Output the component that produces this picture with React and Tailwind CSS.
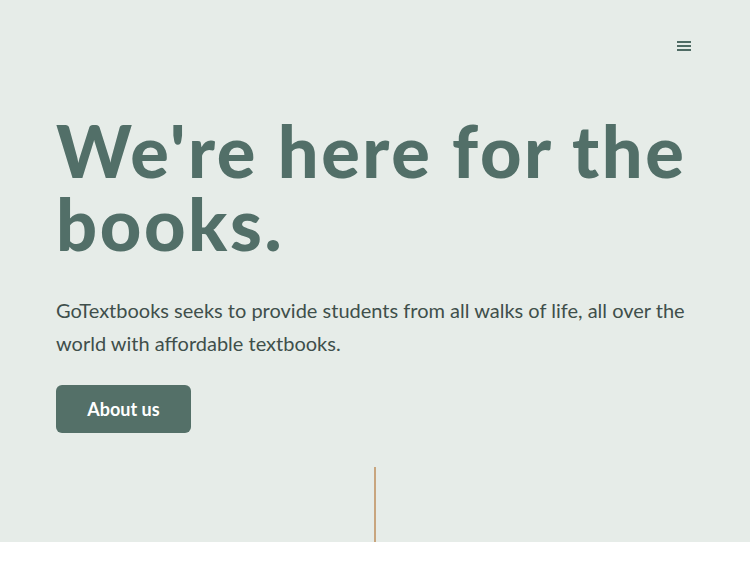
export default function App() {
  return (
    <div className="w-full bg-white" style={{ fontFamily: "Lato, 'Open Sans', sans-serif" }}>
      <section className="bg-[#e6ece8] pl-14 pr-[50px] h-[542px] flex flex-col">
        <header className="flex justify-end pt-[40px] pr-[9px]">
          <button className="w-[14px] h-[12px] flex flex-col justify-between py-[1px]" aria-label="menu">
            <span className="block h-[2px] w-full bg-[#4f6b64]" />
            <span className="block h-[2px] w-full bg-[#4f6b64]" />
            <span className="block h-[2px] w-full bg-[#4f6b64]" />
          </button>
        </header>
        <h1 className="mt-[62px] text-[72px] leading-[73px] font-black text-[#526f68] tracking-[2.6px]">
          We're here for the books.
        </h1>
        <p className="mt-[34px] pr-[6px] text-[20px] leading-[33px] text-[#3f4f4b]">
          GoTextbooks seeks to provide students from all walks of life, all over the world with affordable textbooks.
        </p>
        <div className="mt-[25px]">
          <button className="w-[135px] h-[48px] rounded-[6px] bg-[#547068] text-white font-bold text-[18px]">
            About us
          </button>
        </div>
        <div className="flex-1 flex justify-center items-end pr-[6px]">
          <div className="w-[2px] h-[75px] bg-[#c8a57e]" />
        </div>
      </section>
      <div className="h-[21px] bg-white" />
    </div>
  );
}
